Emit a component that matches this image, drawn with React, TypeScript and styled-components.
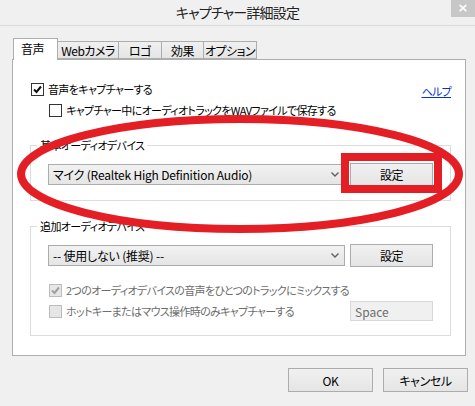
import React from 'react';
import styled, { createGlobalStyle } from 'styled-components';

const GlobalStyle = createGlobalStyle`
  html, body {
    margin: 0;
    padding: 0;
    background: #f0f0f0;
  }
  body {
    font-family: "Noto Sans CJK JP", "Noto Sans", sans-serif;
    font-size: 12px;
    color: #000;
  }
`;

const Window = styled.div`
  position: relative;
  width: 475px;
  height: 406px;
  background: #f0f0f0;
  overflow: hidden;
  font-feature-settings: "palt";
`;

const TitleBar = styled.div`
  height: 25px;
  border-bottom: 1px solid #dadada;
  display: grid;
  grid-template-columns: 1fr auto 1fr;
`;

const Title = styled.div`
  grid-column: 2;
  font-size: 14px;
  letter-spacing: -0.8px;
  line-height: 25px;
  color: #222;
`;

const CloseButton = styled.div`
  grid-column: 3;
  justify-self: end;
  width: 24px;
  height: 17px;
  background: #c7c7c7;
  color: #fff;
  font-family: "DejaVu Sans", sans-serif;
  font-size: 13px;
  font-weight: bold;
  line-height: 16px;
  text-align: center;
`;

const Body = styled.div`
  padding: 12px 9px 0 12px;
`;

const TabStrip = styled.div`
  display: flex;
  align-items: flex-end;
  height: 21px;
  padding-left: 1px;
  position: relative;
  z-index: 1;
`;

const Tab = styled.div<{ $w: number; $active?: boolean }>`
  box-sizing: border-box;
  width: ${p => p.$w}px;
  height: ${p => (p.$active ? 22 : 18)}px;
  margin-bottom: ${p => (p.$active ? -1 : 0)}px;
  margin-left: ${p => (p.$active ? 0 : -1)}px;
  border: 1px solid #adadad;
  border-bottom: ${p => (p.$active ? 'none' : '1px solid #adadad')};
  background: ${p => (p.$active ? '#fff' : 'linear-gradient(#f0f0f0, #e5e5e5)')};
  display: flex;
  align-items: center;
  justify-content: ${p => (p.$active ? 'flex-start' : 'center')};
  padding-left: ${p => (p.$active ? 7 : 0)}px;
  padding-bottom: ${p => (p.$active ? 2 : 0)}px;
  font-size: 12px;
  letter-spacing: -0.5px;
  white-space: nowrap;
  &:first-child { margin-left: 0; }
`;

const Panel = styled.div`
  box-sizing: border-box;
  width: 454px;
  height: 297px;
  border: 1px solid #adadad;
  background: #fff;
  padding: 23px 14px 0 17px;
  display: flex;
  flex-direction: column;
`;

const CheckRow = styled.div<{ $indent?: number; $disabled?: boolean; $mt?: number }>`
  display: flex;
  align-items: center;
  gap: 3px;
  height: 13px;
  margin-left: ${p => p.$indent ?? 1}px;
  margin-top: ${p => p.$mt ?? 0}px;
  color: ${p => (p.$disabled ? '#6d6d6d' : '#000')};
  white-space: nowrap;
  font-size: 11px;
  letter-spacing: -0.65px;
  line-height: 13px;
`;

const TopRow = styled.div`
  display: flex;
  align-items: center;
  justify-content: space-between;
  height: 13px;
`;

const HelpLink = styled.a`
  color: #0033cc;
  text-decoration: underline;
  font-size: 11px;
  letter-spacing: -0.7px;
  line-height: 13px;
  margin-top: 4px;
`;

const Box = styled.span<{ $disabled?: boolean }>`
  box-sizing: border-box;
  width: 13px;
  height: 13px;
  flex: 0 0 13px;
  border: 1px solid ${p => (p.$disabled ? '#bcbcbc' : '#333')};
  background: ${p => (p.$disabled ? '#e6e6e6' : '#fff')};
  display: flex;
  align-items: center;
  justify-content: center;
  margin-right: 1px;
`;

const GroupBox = styled.fieldset<{ $mt: number }>`
  margin: ${p => p.$mt}px 0 0 0;
  padding: 11px 17px 14px 17px;
  border: 1px solid #dcdcdc;
  min-width: 0;
  display: flex;
  flex-direction: column;
`;

const Legend = styled.legend`
  padding: 0 3px;
  margin-left: -11px;
  font-size: 11px;
  letter-spacing: -0.6px;
  line-height: 14px;
  color: #000;
`;

const DeviceRow = styled.div`
  display: flex;
  align-items: center;
  gap: 5px;
  height: 23px;
`;

const Select = styled.div`
  box-sizing: border-box;
  width: 297px;
  height: 21px;
  border: 1px solid #acacac;
  background: linear-gradient(#f2f2f2, #e5e5e5);
  display: flex;
  align-items: center;
  justify-content: space-between;
  padding: 0 5px 0 4px;
  white-space: nowrap;
  letter-spacing: -0.2px;
`;

const Button = styled.div<{ $w?: number; $h?: number }>`
  box-sizing: border-box;
  width: ${p => p.$w ?? 83}px;
  height: ${p => p.$h ?? 23}px;
  border: 1px solid #acacac;
  background: linear-gradient(#f0f0f0, #e5e5e5);
  display: flex;
  align-items: center;
  justify-content: center;
  white-space: nowrap;
  letter-spacing: -0.4px;
`;

const OptionRow = styled.div<{ $mt: number }>`
  display: flex;
  align-items: center;
  justify-content: space-between;
  margin-top: ${p => p.$mt}px;
`;

const TextField = styled.div`
  box-sizing: border-box;
  width: 83px;
  height: 20px;
  border: 1px solid #d9d9d9;
  background: #f0f0f0;
  color: #6d6d6d;
  display: flex;
  align-items: center;
  padding-left: 4px;
  font-size: 12px;
`;

const Footer = styled.div`
  display: flex;
  justify-content: flex-end;
  gap: 10px;
  margin-top: 12px;
  margin-right: -2px;
`;

const Overlay = styled.svg`
  position: absolute;
  left: 0;
  top: 0;
  pointer-events: none;
`;

const Check = ({ color }: { color: string }) => (
  <svg width="9" height="9" viewBox="0 0 9 9">
    <path d="M1 4.5 L3.5 7 L8 1.5" fill="none" stroke={color} strokeWidth="2" />
  </svg>
);

const Chevron = () => (
  <svg width="8" height="5" viewBox="0 0 8 5">
    <path d="M0.5 0.5 L4 4 L7.5 0.5" fill="none" stroke="#606060" strokeWidth="1.4" />
  </svg>
);

const CheckBox = ({ checked, disabled }: { checked?: boolean; disabled?: boolean }) => (
  <Box $disabled={disabled}>{checked && <Check color={disabled ? '#a0a0a0' : '#111'} />}</Box>
);

export default function App() {
  return (
    <Window>
      <GlobalStyle />
      <TitleBar>
        <Title>キャプチャー詳細設定</Title>
        <CloseButton>×</CloseButton>
      </TitleBar>
      <Body>
        <TabStrip>
          <Tab $w={45} $active>音声</Tab>
          <Tab $w={62}>Webカメラ</Tab>
          <Tab $w={44}>ロゴ</Tab>
          <Tab $w={43}>効果</Tab>
          <Tab $w={54}>オプション</Tab>
        </TabStrip>
        <Panel>
          <TopRow>
            <CheckRow>
              <CheckBox checked />
              音声をキャプチャーする
            </CheckRow>
            <HelpLink>ヘルプ</HelpLink>
          </TopRow>
          <CheckRow $indent={19} $mt={8}>
            <CheckBox />
            キャプチャー中にオーディオトラックをWAVファイルで保存する
          </CheckRow>
          <GroupBox $mt={21}>
            <Legend>基本オーディオデバイス</Legend>
            <DeviceRow>
              <Select>
                マイク (Realtek High Definition Audio)
                <Chevron />
              </Select>
              <Button>設定</Button>
            </DeviceRow>
          </GroupBox>
          <GroupBox $mt={18}>
            <Legend>追加オーディオデバイス</Legend>
            <DeviceRow>
              <Select>
                -- 使用しない (推奨) --
                <Chevron />
              </Select>
              <Button>設定</Button>
            </DeviceRow>
            <OptionRow $mt={17}>
              <CheckRow $disabled>
                <CheckBox checked disabled />
                2つのオーディオデバイスの音声をひとつのトラックにミックスする
              </CheckRow>
            </OptionRow>
            <OptionRow $mt={4}>
              <CheckRow $disabled>
                <CheckBox disabled />
                ホットキーまたはマウス操作時のみキャプチャーする
              </CheckRow>
              <TextField>Space</TextField>
            </OptionRow>
          </GroupBox>
        </Panel>
        <Footer>
          <Button $w={85} $h={24}>OK</Button>
          <Button $w={85} $h={24}>キャンセル</Button>
        </Footer>
      </Body>
      <Overlay width="475" height="406" viewBox="0 0 475 406">
        <ellipse cx="240" cy="174" rx="219" ry="55" fill="none" stroke="#e41e25" strokeWidth="8" />
        <rect x="345" y="157" width="93" height="32" fill="none" stroke="#e41e25" strokeWidth="8" />
      </Overlay>
    </Window>
  );
}
